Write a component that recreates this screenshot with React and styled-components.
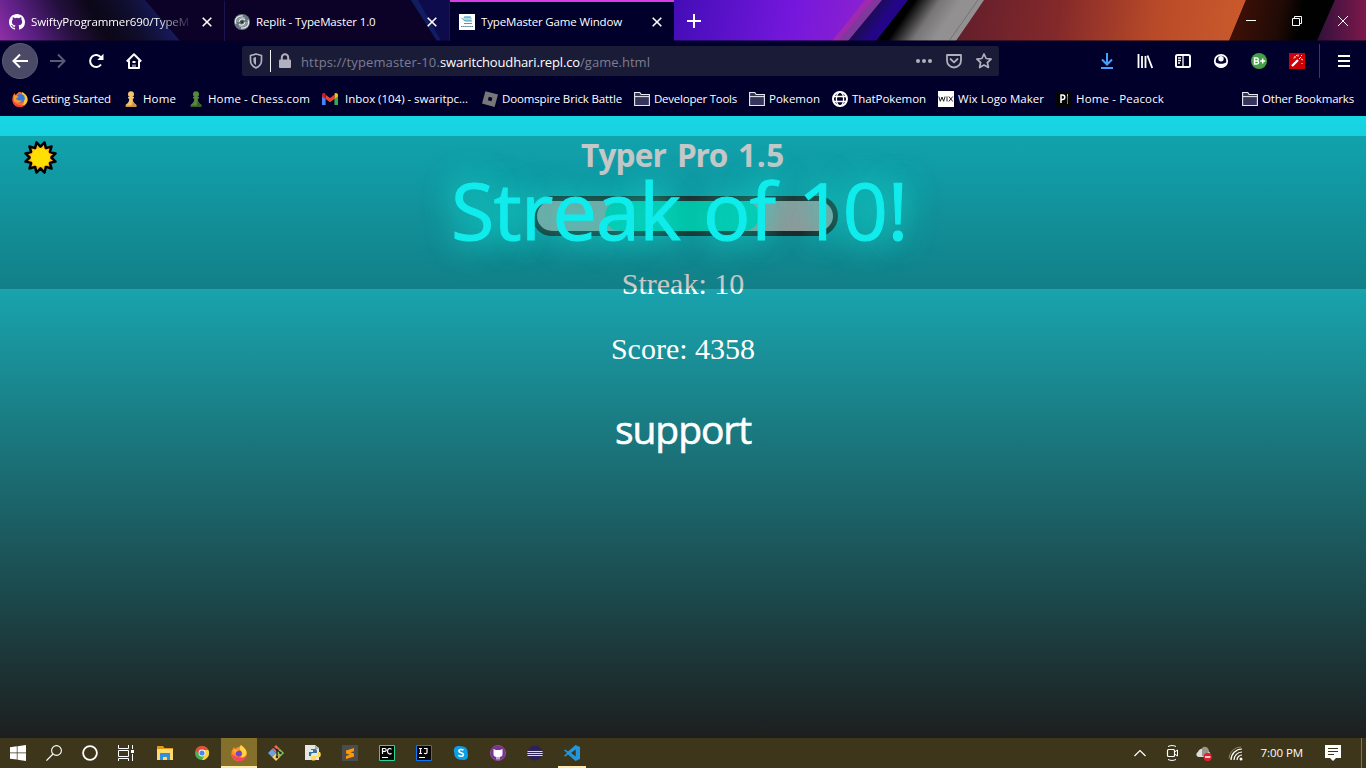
import React, { useLayoutEffect, useRef } from 'react';
import styled, { createGlobalStyle } from 'styled-components';

const Global = createGlobalStyle`
  * { box-sizing: border-box; }
  body { margin: 0; overflow: hidden; background: #1e1e1e; }
  svg { display: block; flex: none; }
`;

const UI = '"Open Sans", "Noto Sans", sans-serif';

const Window = styled.div`
  width: 1366px;
  height: 768px;
  display: flex;
  flex-direction: column;
  font-family: ${UI};
  color: #fff;
`;

/* Text set to a given advance width through its tracking */
const Run = styled.span`
  display: inline-block;
  width: ${(p) => p.$w}px;
  white-space: pre;
  flex: none;
`;
function Fit({ w, children }) {
  const ref = useRef(null);
  useLayoutEffect(() => {
    const inner = ref.current;
    inner.style.letterSpacing = '0px';
    const natural = inner.getBoundingClientRect().width;
    inner.style.letterSpacing = `${(w - natural) / String(children).length}px`;
  }, [w, children]);
  return <Run $w={w}><span ref={ref}>{children}</span></Run>;
}

/* ---------- tab strip ---------- */
const TabStrip = styled.header`
  position: relative;
  height: 41px;
  display: flex;
  overflow: hidden;
  flex: none;
`;
const Artwork = styled.svg`
  position: absolute;
  inset: 0;
`;
const Tab = styled.div`
  position: relative;
  width: ${(p) => (p.$active ? 224 : 225)}px;
  height: 41px;
  padding: 0 ${(p) => (p.$active ? 10 : 9)}px 0 9px;
  display: flex;
  align-items: center;
  gap: 6px;
  font-size: 11.5px;
  background: ${(p) => (p.$active ? '#00002b' : 'transparent')};
  border-top: 2px solid ${(p) => (p.$active ? '#d93ee0' : 'transparent')};
  border-right: ${(p) => (p.$active ? 'none' : '1px solid #1c1650')};
`;
const TabTitle = styled.div`
  flex: 1;
  min-width: 0;
  overflow: hidden;
  line-height: 20px;
  padding-top: 1px;
  ${(p) => p.$fade && 'mask-image: linear-gradient(90deg, #000 76%, transparent 99%);'}
`;
const TabClose = styled.div`
  width: 14px;
  display: flex;
  justify-content: center;
  margin-left: -1px;
  margin-right: ${(p) => (p.$wide ? 0 : 1)}px;
`;
const NewTab = styled.div`
  position: relative;
  width: 40px;
  display: flex;
  align-items: center;
  justify-content: center;
`;
const Controls = styled.div`
  position: relative;
  margin-left: auto;
  display: flex;
  align-items: center;
`;
const Control = styled.div`
  width: 46px;
  display: flex;
  justify-content: center;
`;

/* ---------- navigation ---------- */
const NavBar = styled.nav`
  height: 40px;
  flex: none;
  background: #00002b;
  display: flex;
  align-items: center;
  padding-left: 1px;
`;
const NavButton = styled.div`
  width: 38px;
  height: 38px;
  display: flex;
  align-items: center;
  justify-content: center;
`;
const BackDisc = styled.div`
  width: 36px;
  height: 36px;
  border-radius: 50%;
  background: #4b4a66;
  border: 1px solid #5c5b75;
  display: flex;
  align-items: center;
  justify-content: center;
`;
const UrlBar = styled.div`
  width: 757px;
  height: 30px;
  margin-left: 89px;
  background: #1a1b37;
  border-radius: 2px;
  display: flex;
  align-items: center;
  padding: 0 7px 0 6px;
`;
const UrlDivider = styled.div`
  width: 1px;
  height: 22px;
  background: #f2f2f6;
  margin: 0 6px;
`;
const Address = styled.div`
  margin-left: 8px;
  flex: 1;
  font-size: 13px;
  line-height: 20px;
  padding-top: 2px;
  color: #7c7d92;
  display: flex;
  b { font-weight: 400; color: #fff; }
`;
const UrlActions = styled.div`
  display: flex;
  gap: 14px;
`;
const Tools = styled.div`
  margin-left: 89px;
  display: flex;
  align-items: center;
`;
const ToolDivider = styled.div`
  width: 1px;
  height: 34px;
  background: #3a3a5c;
  margin: 0 5px 0 3px;
`;

/* ---------- bookmarks ---------- */
const Bookmarks = styled.div`
  height: 35px;
  flex: none;
  background: #00002b;
  display: flex;
  align-items: center;
  padding-left: 12px;
  font-size: 11.5px;
`;
const Bookmark = styled.div`
  width: ${(p) => p.$w}px;
  ${(p) => p.$last && 'margin-left: auto;'}
  display: flex;
  align-items: center;
  gap: ${(p) => p.$gap || 4}px;
  line-height: 18px;
`;

/* ---------- game ---------- */
const Game = styled.main`
  position: relative;
  flex: 1;
  background: linear-gradient(180deg, #17d7e5 0%, #1d1e1e 100%);
  display: flex;
  flex-direction: column;
  align-items: center;
`;
const Title = styled.h1`
  margin: 19px 0 0;
  height: 40px;
  line-height: 40px;
  font-size: 31.5px;
  font-weight: 700;
  display: flex;
  gap: 11px;
`;
const Track = styled.div`
  margin: 21px 0 0 4px;
  width: 306px;
  height: 40px;
  border: 5px solid #292929;
  border-radius: 20px;
  background: #c3c0c0;
  padding-left: 68px;
`;
const Progress = styled.div`
  width: 154px;
  height: 30px;
  border-radius: 15px;
  background: #00f5d0;
`;
const Stat = styled.div`
  font: 30px/40px "Liberation Serif", serif;
  margin-top: ${(p) => p.$top}px;
`;
const Word = styled.div`
  margin-top: 34px;
  font-size: 39px;
  line-height: 50px;
  padding-top: 1px;
  -webkit-text-stroke: 0.6px #fff;
`;
const Shade = styled.div`
  position: absolute;
  left: 0;
  right: 0;
  top: 20px;
  height: 153px;
  background: rgba(0, 0, 0, 0.22);
`;
const Announcement = styled.div`
  position: absolute;
  top: 44px;
  left: 451px;
  height: 100px;
  font-size: 79px;
  line-height: 100px;
  display: flex;
  color: #10ecec;
  -webkit-text-stroke: 1px #10ecec;
  text-shadow: 0 0 30px rgba(20, 230, 215, 0.9), 0 0 36px rgba(20, 230, 215, 0.7);
  gap: 23px;
`;
const ThemeToggle = styled.div`
  position: absolute;
  left: 23px;
  top: 24px;
`;

/* ---------- taskbar ---------- */
const Taskbar = styled.footer`
  height: 30px;
  flex: none;
  background: #3e361b;
  display: flex;
`;
const SystemGroup = styled.div`
  display: flex;
  width: 147px;
`;
const AppGroup = styled.div`
  display: flex;
  gap: 1px;
`;
const Task = styled.div`
  width: 36px;
  height: 30px;
  display: flex;
  align-items: center;
  justify-content: center;
  background: ${(p) => (p.$active ? '#84702a' : 'transparent')};
  box-shadow: ${(p) => (p.$active ? 'inset 0 -2px #ffeaa9' : 'none')};
  ${(p) => p.$running && 'background: linear-gradient(#ffeaa9,#ffeaa9) 50% 100% / 28px 2px no-repeat;'}
`;
const Tray = styled.div`
  margin-left: auto;
  display: flex;
  align-items: center;
  padding-right: 4px;
`;
const TrayItem = styled.div`
  width: 32px;
  display: flex;
  justify-content: center;
`;
const Clock = styled.div`
  font-size: 11.5px;
  line-height: 20px;
  margin: 0 22px 0 9px;
`;
const ShowDesktop = styled.div`
  width: 1px;
  height: 30px;
  background: #79745f;
  margin-left: 20px;
`;

const S = ({ s = 16, children, ...p }) => (
  <svg width={s} height={s} viewBox="0 0 16 16" fill="none" {...p}>{children}</svg>
);

const GitHub = () => <S><path fill="#fff" d="M8 0C3.58 0 0 3.58 0 8c0 3.54 2.29 6.53 5.47 7.59.4.07.55-.17.55-.38 0-.19-.01-.82-.01-1.49-2.01.37-2.53-.49-2.69-.94-.09-.23-.48-.94-.82-1.13-.28-.15-.68-.52-.01-.53.63-.01 1.08.58 1.23.82.72 1.21 1.87.87 2.33.66.07-.52.28-.87.51-1.07-1.78-.2-3.64-.89-3.64-3.95 0-.87.31-1.59.82-2.15-.08-.2-.36-1.02.08-2.12 0 0 .67-.21 2.2.82a7.6 7.6 0 0 1 4 0c1.53-1.04 2.2-.82 2.2-.82.44 1.1.16 1.92.08 2.12.51.56.82 1.27.82 2.15 0 3.07-1.87 3.75-3.65 3.95.29.25.54.73.54 1.48 0 1.07-.01 1.93-.01 2.2 0 .21.15.46.55.38A8 8 0 0 0 16 8c0-4.42-3.58-8-8-8z" /></S>;
const Replit = () => <S><circle cx="8" cy="8" r="8" fill="#68777d" /><path d="M2 10C0 5 4 1 9 2M14 6c2 5-2 9-7 8M5 8c0-3 4-4 6-2M11 8c0 3-4 4-6 2" stroke="#e3e7e8" strokeWidth="1.200" /><path d="M3 8c0-4 5-5 8-4M13 8c0 4-5 5-8 4" stroke="#c3cbce" strokeWidth=".8" /><circle cx="8" cy="8" r="1.500" fill="#29353c" /></S>;
const GameIcon = () => <S><path fill="#fff" d="M0 0h16v16H0z" /><path d="M4 3.500c3-1.500 7-1 9 .5l-1 3H6z" fill="#a9d8e8" /><path d="M2.500 4l3.500 3h7M5 3h7M5 9.500h8" stroke="#3f8fb0" strokeWidth=".9" /><path d="M2 12.500h12" stroke="#56768a" strokeDasharray="1.500 .6" strokeWidth="1.200" /></S>;
const Close = () => <S s={10} viewBox="0 0 10 10"><path d="M.7.7l8.6 8.6M9.3.7L.7 9.3" stroke="#fff" strokeWidth="1.600" /></S>;
const Firefox = () => <S><path d="M7 1c3 0 8 2 8.500 7 0 5-4 8-8 8C3 16 .2 12.400 .4 8.500.5 5 1.500 3.500 2.500 2l.8 2C5 3 5.500 2 7 1z" fill="#ff6a27" /><path d="M10 1c4 2 6 5 5.500 8.500C15 13 12 15 9 15c4-2 4-7 1-9z" fill="#ffca2e" /><path d="M.6 9C1 13 4 16 8 16c3 0 5-1 6-3-5 3-11 1-13.400-4z" fill="#f7315f" /><circle cx="8.500" cy="7.200" r="4.300" fill="#2f78e8" /><path d="M2 5c2-1 3.500 0 5 1-2 .4-2.500 1-3 2.500 2 0 3 2 6 .5-1 3-6 4-8 .5z" fill="#ff9a27" /></S>;
const FirefoxTask = () => <S><path d="M3 2l1 2c1-1 2-2 4-2l2-2c1 2 5 3 5.600 7C16.500 12 13 16 8 16S0 12 .4 8C.5 5 2 4 3 2z" fill="#ff8b21" /><path d="M.5 9c.5 4 3.500 7 7.500 7s7-2 7.600-6c-4 4-11 3-15.100-1z" fill="#ff405e" /><path d="M10 0c2 2 6 4 5.500 9-1 3-4 4-6 3 3-2 2-5 0-6.500C8 4 9 2 10 0z" fill="#ffd744" /><circle cx="7.800" cy="8.500" r="3.100" fill="#7445c9" /><path d="M2 5c3-1 4 0 6 1-3 0-3 1-4 3z" fill="#ffb132" /></S>;
const Pawn = ({ c, d }) => <S><circle cx="8" cy="3.200" r="3" fill={c} /><path d="M5 6h6v1.200l-1.200.6c0 3 1 4.200 3.500 6V16H2.700v-2.200c2.500-1.800 3.500-3 3.500-6L5 7.200z" fill={c} /><path d="M9.500 8c0 3 1 4.200 3.800 6v2H8v-1c1.500-1 1.500-4 1.500-7zM3 14.500h10V16H3z" fill={d} /></S>;
const Gmail = () => <S><path d="M0 3.500V14h3.600V7z" fill="#4285f4" /><path d="M16 3.500V14h-3.600V7z" fill="#34a853" /><path d="M12.400 4.200V8L16 5.400V4c0-1.800-2-2.600-3.300-1.500z" fill="#fbbc04" /><path d="M3.600 8V3.800L8 7l4.400-3.200V8L8 11.200z" fill="#ea4335" /><path d="M0 4v1.400L3.600 8V3.500l-.4-1C2 1.600 0 2.200 0 4z" fill="#c5221f" /></S>;
const Roblox = () => <S><path d="M3.400.3L16 3.500 12.600 16 0 12.500z" fill="#77777a" /><path d="M6.800 5.800l3.600 1-1 3.500-3.500-1z" fill="#00002b" /></S>;
const Folder = () => <S><path d="M.6 14.500v-13h5.200l1.300 2h8.300v11z" fill="#35355b" stroke="#e9e9f2" strokeWidth="1.100" /><path d="M.6 5.600h14.800" stroke="#e9e9f2" /></S>;
const Globe = () => <S><circle cx="8" cy="8" r="7" stroke="#fff" strokeWidth="2" /><ellipse cx="8" cy="8" rx="3.600" ry="7" stroke="#fff" strokeWidth="1.300" /><path d="M1 5.500h14M1 10.500h14" stroke="#fff" strokeWidth="1.300" /></S>;
const Wix = () => <S><path d="M0 0h16v16H0z" fill="#fff" /><path d="M.8 5.500l1.500 4.800L4 6l1.600 4.300 1.500-4.800M9 5.500v5M10.800 5.500l4 5M14.800 5.500l-4 5" stroke="#222" strokeWidth="1" /></S>;
const Peacock = () => <S><path d="M0 0h16v16H0z" fill="#050505" /><path d="M5 12V4h1.500a2.200 2.200 0 0 1 0 4.600H5" stroke="#fff" strokeWidth="1.500" /><path d="M11.500 3v2" stroke="#dfc339" /><path d="M11.500 5v2" stroke="#e5692e" /><path d="M11.500 7v2" stroke="#b549a4" /><path d="M11.500 9v2" stroke="#3b86dd" /><path d="M11.500 11v2" stroke="#3fa773" /></S>;

function ThemeArtwork() {
  return (
    <Artwork width="1366" height="41" viewBox="0 0 1366 41">
      <defs>
        <linearGradient id="a" gradientUnits="userSpaceOnUse" x1="0" y1="41" x2="85" y2="-4"><stop stopColor="#9130a7" /><stop offset=".28" stopColor="#62218a" /><stop offset=".7" stopColor="#24103f" /><stop offset="1" stopColor="#0c0716" /></linearGradient>
        <linearGradient id="b" gradientUnits="userSpaceOnUse" x1="95" y1="41" x2="160" y2="5"><stop stopColor="#0c0716" stopOpacity="0" /><stop offset="1" stopColor="#171b60" /></linearGradient>
        <linearGradient id="c" gradientUnits="userSpaceOnUse" x1="674" y1="0" x2="865" y2="35"><stop stopColor="#430db6" /><stop offset=".6" stopColor="#7417dc" /><stop offset="1" stopColor="#8d21d0" /></linearGradient>
        <linearGradient id="d" gradientUnits="userSpaceOnUse" x1="885" y1="15" x2="930" y2="46"><stop stopColor="#000" /><stop offset=".3" stopColor="#000" /><stop offset=".68" stopColor="#777575" /><stop offset="1" stopColor="#929090" /></linearGradient>
        <linearGradient id="e" gradientUnits="userSpaceOnUse" x1="965" y1="0" x2="1235" y2="40"><stop stopColor="#641f2c" /><stop offset=".35" stopColor="#84292a" /><stop offset=".7" stopColor="#b84a28" /><stop offset="1" stopColor="#c9592c" /></linearGradient>
        <linearGradient id="f" gradientUnits="userSpaceOnUse" x1="1235" y1="0" x2="1345" y2="25"><stop stopColor="#421007" /><stop offset=".42" stopColor="#200b06" /><stop offset=".6" stopColor="#020101" /></linearGradient>
        <linearGradient id="g" x1="0" x2="1"><stop stopColor="#31103c" /><stop offset="1" stopColor="#7c194b" /></linearGradient>
        <linearGradient id="h" gradientUnits="userSpaceOnUse" x1="865" y1="5" x2="885" y2="20"><stop stopColor="#171038" /><stop offset="1" stopColor="#24058a" /></linearGradient>
      </defs>
      <path fill="#0c0228" d="M0 0h450v41H0z" />
      <path fill="url(#a)" d="M0 0h145l35 41H0z" />
      <path fill="url(#b)" d="M80 0h65l35 41H80z" />
      <path fill="#0e0b4d" d="M411 0h39v41h-13z" />
      <path fill="#101e61" d="M411 0h7l23 41h-4z" />
      <path fill="url(#c)" d="M674 0h220l-40 41H674z" />
      <path fill="#a02aaf" d="M865 0h17l-36 41h-14z" />
      <path fill="#80389d" d="M873 0h15l-35 41h-15z" />
      <path fill="url(#h)" d="M882 0h28l-32 41h-30z" />
      <path fill="url(#d)" d="M908 0h78l-30 41h-80z" />
      <path d="M978 0l-29 41" stroke="#777176" strokeWidth="1" />
      <path fill="url(#e)" d="M984 0h262l-17 41H956z" />
      <path fill="url(#f)" d="M1246 0h89l-18 41h-88z" />
      <path fill="url(#g)" d="M1335 0h31v41h-49z" />
      <path fill="#080221" fillOpacity=".55" d="M0 40h1366v1H0z" />
    </Artwork>
  );
}

/* twelve-pointed sun, alternating notch and tip */
const rays = Array.from({ length: 24 }, (_, i) => {
  const a = (i * Math.PI) / 12;
  const r = i % 2 ? 15.6 : 10.8;
  return `${17.5 + r * Math.sin(a)},${17.5 + r * Math.cos(a)}`;
}).join(' ');

const marks = [
  [111, <Firefox />, 'Getting Started', 79],
  [65, <Pawn c="#f2c56c" d="#cf9440" />, 'Home', 33],
  [134, <Pawn c="#55883a" d="#35612b" />, 'Home - Chess.com', 102],
  [160, <Gmail />, 'Inbox (104) - swaritpc...', 123, 7],
  [152, <Roblox />, 'Doomspire Brick Battle', 120],
  [115, <Folder />, 'Developer Tools', 83],
  [83, <Folder />, 'Pokemon', 51],
  [106, <Globe />, 'ThatPokemon', 74],
  [118, <Wix />, 'Wix Logo Maker', 86],
  [112, <Peacock />, 'Home - Peacock', 88],
];

const Jet = ({ c, ij }) => (
  <S><path d="M.5.5h15v15H.5z" fill="#050505" stroke={c} />
    {ij
      ? <path d="M3 3.500h3M4.500 3.500v5M3 8.500h3M8 3.500h3v4c0 1-1.500 1.500-3 .8" stroke="#fff" strokeWidth="1.200" />
      : <path d="M3.500 9V3.500h2.200c2 0 2 2.900 0 2.900H3.500M12.500 4.300C11 2.800 8.500 3.500 8.500 6.200s2.500 3.300 4 2" stroke="#fff" strokeWidth="1.200" />}
    <path d="M3 12.500h6" stroke="#fff" /></S>
);

const systemIcons = [
  <S><path fill="#fff" d="M0 2.200l6.800-.9v6.200H0zM7.500 1.200L16 0v7.500H7.500zM0 8.300h6.800v6.300L0 13.700zM7.500 8.300H16V16l-8.500-1.200z" /></S>,
  <S><circle cx="10.500" cy="5.500" r="4.900" stroke="#fff" strokeWidth="1.100" /><path d="M7 9L.4 15.600" stroke="#fff" strokeWidth="1.200" /></S>,
  <S><circle cx="8" cy="8" r="6.900" stroke="#fff" strokeWidth="1.800" /></S>,
  <S><path d="M.5 0v3.500h10V0M.5 16v-2.500h10V16M.5 5.500h10v6H.5zM14.500 0v4M14.500 9v7" stroke="#fff" /><path fill="#fff" d="M13 5h3v3h-3z" /></S>,
];
const appIcons = [
  <S><path fill="#df9c12" d="M0 1h6l1.500 2H16v3H0z" /><path fill="#ffda6c" d="M0 4h16v11H0z" /><path fill="#3290d8" d="M3 8h10v7h-3v-3H6v3H3z" /></S>,
  <S><circle cx="8" cy="8" r="7" fill="#4caf50" /><path d="M1.700 5A7 7 0 0 1 14.400 5H8L5 9z" fill="#e94b3d" /><path d="M8 5h6.400A7 7 0 0 1 8 15l3-5.500z" fill="#ffd23d" /><circle cx="8" cy="8" r="3.400" fill="#fff" /><circle cx="8" cy="8" r="2.600" fill="#4688ed" /></S>,
  <FirefoxTask />,
  <S><path d="M8 0l4 4-4 4-4-4z" fill="#ed6c59" /><path d="M4 4l4 4-4 4-4-4z" fill="#6aa0e5" /><path d="M12 4l4 4-4 4-4-4z" fill="#8bc65a" /><path d="M8 8l4 4-4 4-4-4z" fill="#f4ce67" /><path d="M5 2l4 3v8M9 5l4 3" stroke="#302b2b" strokeWidth="1.400" /><circle cx="9" cy="5" r="1.300" fill="#302b2b" /><circle cx="9" cy="12" r="1.300" fill="#302b2b" /><circle cx="12.500" cy="8" r="1.300" fill="#302b2b" /></S>,
  <S><path d="M0 0h10l4 3v12H0z" fill="#e6e6e2" /><path d="M10 0v4h4" fill="#aaa" /><path d="M6 4h4c2 0 2 1 2 4H8c-2 0-2 1-2 3H4V7h4V5H6z" fill="#356f9f" /><path d="M13 7h2c1 1 1 4 0 5h-4v2c0 2-5 2-5 0v-3h5c2 0 2-1 2-4z" fill="#ffda59" /></S>,
  <S><path d="M0 0h16v16H0z" fill="#4c4c4c" /><path d="M4 5.400L12 3v3.200L8.500 7.300 12 8.500v3L4 14v-3l3.700-1.200L4 8.500z" fill="#ff9800" /></S>,
  <Jet c="#24d69a" />,
  <Jet c="#0879f8" ij />,
  <S><path d="M1.500 3C3 .5 6 .8 8 1.200c5 0 7 3 6.700 7C16 13 13 16 9 14.800 4 15 1 12 1.300 8 .5 6 .7 4 1.500 3z" fill="#0b9fe8" /><path d="M10.500 5.200C9 4 5.800 4.200 5.800 6c0 2.300 4.600 1.300 4.600 3.700 0 2-3.600 2-5 .5" stroke="#fff" strokeWidth="1.600" /></S>,
  <S><circle cx="8" cy="8" r="7.600" fill="#7b3391" stroke="#94529f" strokeWidth=".8" /><path d="M3.500 4l2.500 1h4l2.500-1v5.500c0 2-2 2.700-4.500 2.700S3.500 11.500 3.500 9.500z" fill="#fff" /><path d="M6 12h4v2.500H6z" fill="#c9a5d3" /></S>,
  <S><circle cx="8" cy="8" r="7.500" fill="#2c2255" /><path d="M.5 6.500h15M.3 8.500h15.400M.5 10.500h15" stroke="#dedbed" strokeWidth="1" /></S>,
  <S><path d="M11.500 0L16 2v12l-4.500 2L4 9.500 1.500 11.500 0 10.700 3 8 0 5.300l1.500-.8L4 6.500zM11.700 4.500L7 8l4.700 3.500z" fill="#2196dc" fillRule="evenodd" /></S>,
];

export default function App() {
  return (
    <Window>
      <Global />
      <TabStrip>
        <ThemeArtwork />
        <Tab><GitHub /><TabTitle $fade><Fit w={158}>SwiftyProgrammer690/TypeM</Fit></TabTitle><TabClose><Close /></TabClose></Tab>
        <Tab><Replit /><TabTitle><Fit w={119.500}>Replit - TypeMaster 1.0</Fit></TabTitle><TabClose><Close /></TabClose></Tab>
        <Tab $active><GameIcon /><TabTitle><Fit w={141}>TypeMaster Game Window</Fit></TabTitle><TabClose $wide><Close /></TabClose></Tab>
        <NewTab><S><path d="M8 1v14M1 8h14" stroke="#fff" strokeWidth="2" /></S></NewTab>
        <Controls>
          <Control><S s={10} viewBox="0 0 10 10"><path d="M0 4.500h10" stroke="#fff" /></S></Control>
          <Control><S s={10} viewBox="0 0 10 10"><path d="M.5 2.500h7v7h-7zM2.500 2.500v-2h7v7h-2" stroke="#fff" /></S></Control>
          <Control><S s={10} viewBox="0 0 10 10"><path d="M0 0l10 10M10 0L0 10" stroke="#fff" /></S></Control>
        </Controls>
      </TabStrip>

      <NavBar>
        <NavButton><BackDisc><S><path d="M16 8H1.500M8 1.500L1.500 8 8 14.500" stroke="#fff" strokeWidth="2" /></S></BackDisc></NavButton>
        <NavButton><S><path d="M0 8h14.500M8 1.500L14.500 8 8 14.500" stroke="#5b5a76" strokeWidth="2" /></S></NavButton>
        <NavButton><S><path d="M13 11.500A6 6 0 1 1 13 4.500" stroke="#fff" strokeWidth="2" /><path d="M15.500.8v6.200H9.300z" fill="#fff" /></S></NavButton>
        <NavButton><S><path d="M.8 8.500L8 1.300l7.200 7.200M3 7.500V15h10V7.500" stroke="#fff" strokeWidth="2" strokeLinejoin="round" /><path d="M6.500 8h3v2h-3zM6.500 11.500h1V14h-1zM8.500 11.500h1V14h-1z" fill="#fff" /></S></NavButton>
        <UrlBar>
          <S><path d="M8 1l5.500 1.500v5c0 3.600-2.300 6-5.500 7.400-3.200-1.400-5.500-3.800-5.500-7.400v-5z" stroke="#b0b0bf" strokeWidth="1.700" strokeLinejoin="round" /><path d="M8 4l-2.600.7v3c0 2 .8 3.200 2.600 4.300z" fill="#b0b0bf" /></S>
          <UrlDivider />
          <S><path d="M4.800 7V4.400a3.200 3.200 0 0 1 6.400 0V7" stroke="#b0b0bf" strokeWidth="2" /><rect x="2" y="6.500" width="12" height="8.500" rx="1" fill="#b0b0bf" /></S>
          <Address><Fit w={139}>https://typemaster-10.</Fit><b><Fit w={140}>swaritchoudhari.repl.co</Fit></b><Fit w={70}>/game.html</Fit></Address>
          <UrlActions>
            <S fill="#b0b0bf"><circle cx="2" cy="8" r="2" /><circle cx="8" cy="8" r="2" /><circle cx="14" cy="8" r="2" /></S>
            <S><path d="M1 2h14v5.500a7 7 0 0 1-14 0zM4.500 6L8 9.300 11.500 6" stroke="#b0b0bf" strokeWidth="1.800" strokeLinecap="round" strokeLinejoin="round" /></S>
            <S><path d="M8 1l2.100 4.500 5 .6-3.700 3.400 1 5L8 12.100 3.600 14.500l1-5L.9 6.100l5-.6z" stroke="#b0b0bf" strokeWidth="1.700" strokeLinejoin="round" /></S>
          </UrlActions>
        </UrlBar>
        <Tools>
          <NavButton><S><path d="M8 0v11M3 6.500l5 5 5-5M2 15h12" stroke="#45a1ff" strokeWidth="2" /></S></NavButton>
          <NavButton><S><path d="M1.500 1v14M5 3v12M8.500 3v12" stroke="#fff" strokeWidth="1.800" /><path d="M10.500 2.500L15.200 15" stroke="#fff" strokeWidth="1.800" /></S></NavButton>
          <NavButton><S><rect x="1" y="2" width="14" height="12" rx="1.500" stroke="#fff" strokeWidth="2" /><path d="M8 2v12M3 5h3M3 7.500h3M3 10h2" stroke="#fff" strokeWidth="1.300" /></S></NavButton>
          <NavButton><S><circle cx="8" cy="8" r="6.200" stroke="#fff" strokeWidth="1.800" /><circle cx="8" cy="5.800" r="2.700" fill="#fff" /><path d="M2 9c1.500 1 3.500 1.800 6 1.800S12.500 10 14 9c-.5 3.500-3 5.500-6 5.500S2.500 12.500 2 9z" fill="#fff" /></S></NavButton>
          <NavButton><S><circle cx="8" cy="8" r="8" fill="#43a047" /><path d="M3.500 5v6h2.300c2.300 0 2.300-2.900.4-3 1.500-.4 1.300-3-.4-3zM3.500 8h3M11.700 5.500v5M9.200 8h5" stroke="#fff" strokeWidth="1.500" /></S></NavButton>
          <NavButton><S><path d="M0 0h16v16H0z" fill="#cc0005" /><path d="M3 13l6-6" stroke="#fff" strokeWidth="2.300" /><path d="M10 6l2-2M6 3v2M9 1.500v2M12 2l1 1M12 6l2 1M13 10v1M7 2l1 1M4.500 5h1" stroke="#fff" /></S></NavButton>
          <ToolDivider />
          <NavButton><S><path d="M2 3h12M2 8h12M2 13h12" stroke="#fff" strokeWidth="2" /></S></NavButton>
        </Tools>
      </NavBar>

      <Bookmarks>
        {marks.map(([w, icon, label, tw, gap]) => (
          <Bookmark key={label} $w={w} $gap={gap}>{icon}<Fit w={tw}>{label}</Fit></Bookmark>
        ))}
        <Bookmark $w={124} $last><Folder /><Fit w={92}>Other Bookmarks</Fit></Bookmark>
      </Bookmarks>

      <Game>
        <Title><Fit w={85}>Typer</Fit><Fit w={50}>Pro</Fit><Fit w={47}>1.5</Fit></Title>
        <Track><Progress /></Track>
        <Stat $top={28}>Streak: 10</Stat>
        <Stat $top={25}>Score: 4358</Stat>
        <Word><Fit w={136}>support</Fit></Word>
        <Shade />
        <Announcement><Fit w={229}>Streak</Fit><Fit w={72}>of</Fit><Fit w={110}>10!</Fit></Announcement>
        <ThemeToggle>
          <S s={35} viewBox="0 0 35 35"><polygon points={rays} fill="#ffb31a" stroke="#000" strokeWidth="2.500" strokeLinejoin="round" /><circle cx="17.500" cy="17.500" r="9.600" fill="#ffdf00" /></S>
        </ThemeToggle>
      </Game>

      <Taskbar>
        <SystemGroup>{systemIcons.map((icon, i) => <Task key={i}>{icon}</Task>)}</SystemGroup>
        <AppGroup>{appIcons.map((icon, i) => <Task key={i} $active={i === 2} $running={i === 11}>{icon}</Task>)}</AppGroup>
        <Tray>
          <TrayItem><S><path d="M2.500 11L8 5.500l5.500 5.500" stroke="#fff" strokeWidth="1.200" /></S></TrayItem>
          <TrayItem><S><rect x="3.500" y="4.500" width="7" height="7" rx="1" stroke="#fff" strokeWidth="1.200" /><path d="M10.500 7l3-2v6l-3-2M4 1.500c3-1.300 5-1.300 8 0M4 14.500c3 1.300 5 1.300 8 0" stroke="#fff" /></S></TrayItem>
          <TrayItem><S><path d="M3 12C0 12-.5 8 2 7c1-4 7-5 9-1 3 0 4 3 3 6z" fill="#ddd" /><path d="M6 3c3-3 7 0 7 3l-4 5H6z" fill="#999589" /><circle cx="11.700" cy="12" r="4.200" fill="#df202e" /><path d="M9 12h5.400" stroke="#fff" strokeWidth="1.500" /></S></TrayItem>
          <TrayItem><S><path d="M3 15A11 11 0 0 1 14 4M6 15a8 8 0 0 1 8-8M9 15a5 5 0 0 1 5-5" stroke="#fff" strokeWidth="1.200" /><path d="M1 13.500A12 12 0 0 1 13 2" stroke="#8a846f" /><circle cx="13" cy="14" r="1.500" fill="#fff" /></S></TrayItem>
          <Clock><Fit w={42.500}>7:00 PM</Fit></Clock>
          <S><path d="M0 0h16v13h-5l-3 3-3-3H0z" fill="#fff" /><path d="M3 3.500h10M3 6.500h10M3 9.500h6" stroke="#3e361b" /></S>
          <ShowDesktop />
        </Tray>
      </Taskbar>
    </Window>
  );
}
